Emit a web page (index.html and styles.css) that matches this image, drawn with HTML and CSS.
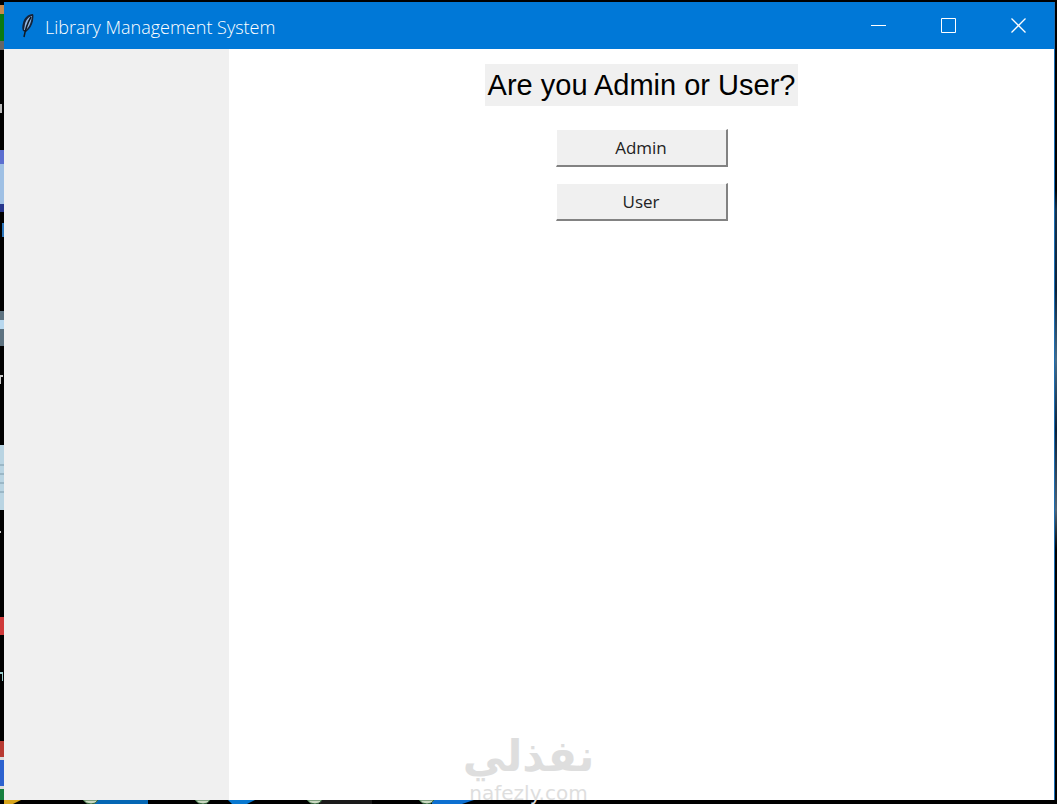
FILE: index.html
```html
<!DOCTYPE html>
<html lang="en">
<head>
    <meta charset="UTF-8">
    <meta name="viewport" content="width=device-width, initial-scale=1.0">
    <title>Library Management System</title>
    <link rel="stylesheet" href="styles.css">
</head>
<body>

    <!-- desktop behind the window -->
    <svg class="desktop-left" width="4" height="804" aria-hidden="true">
        <rect y="5" width="4" height="9" fill="#c98a4a"/>
        <rect y="14" width="4" height="27" fill="#0b7a12"/>
        <rect y="41" width="4" height="9" fill="#666"/>
        <path d="M0 104h2v9h-2z" fill="#bbb"/>
        <rect y="150" width="4" height="14" fill="#5c6fd0"/>
        <rect y="164" width="4" height="40" fill="#9fc0e4"/>
        <rect y="204" width="4" height="8" fill="#26368c"/>
        <rect x="2" y="223" width="2" height="14" fill="#2b76bd"/>
        <rect y="311" width="4" height="35" fill="#5d7280"/>
        <rect y="320" width="4" height="9" fill="#b8d8ef"/>
        <path d="M0 375h3v2h-2v7h-1z" fill="#ccc"/>
        <rect y="445" width="4" height="65" fill="#b9d4e2"/>
        <path d="M0 465h4M0 474h4M0 483h4M0 492h4" stroke="#7d9aaa"/>
        <rect y="531" width="1" height="2" fill="#ccc"/>
        <rect y="617" width="4" height="18" fill="#cf3a3a"/>
        <path d="M0 672h3v9h-1v-7h-2z" fill="#9cc"/>
        <rect y="741" width="4" height="16" fill="#b83a32"/>
        <rect y="757" width="4" height="3" fill="#ddd"/>
        <rect y="760" width="4" height="26" fill="#2d62cf"/>
        <rect y="786" width="4" height="3" fill="#ddd"/>
        <rect y="789" width="4" height="15" fill="#178040"/>
    </svg>
    <svg class="desktop-bottom" width="500" height="4" aria-hidden="true">
        <path d="M4 0h17l-8 4H4z" fill="#d8a51c"/>
        <path d="M96 0h52v4H92z" fill="#0567b4"/>
        <path d="M228 0h27l-8 4h-15z" fill="#0878d0"/>
        <path d="M320 0h52v4h-52z" fill="#1b1b1b"/>
        <path d="M432 0h42l-12 4h-30z" fill="#0d6fd0"/>
        <path d="M83 0h15q-2 4-7 4t-8-4zM195 0h15q-2 4-7 4t-8-4zM307 0h15q-2 4-7 4t-8-4zM419 0h15q-2 4-7 4t-8-4z" fill="#c9d8c0" stroke="#31643a"/>
    </svg>

    <div class="window">
        <header class="titlebar">
            <svg class="feather" width="18" height="26" viewBox="0 0 18 26" aria-hidden="true">
                <path d="M15 1C10 1 6 5 5 10c-1 3-1 6 0 8l3 1c4-3 6-7 7-11 0-3 1-5 0-7z" fill="#152338"/>
                <path d="M14 3C10 4 8 7 7 11l-1 6 2 0c4-4 5-8 6-14z" fill="#8fb4e0"/>
                <path d="M13 4C10 9 8 13 6 24" fill="none" stroke="#101820" stroke-width="1.5"/>
            </svg>
            <span class="title">Library Management System</span>
            <div class="controls">
                <button type="button" aria-label="Minimize">
                    <svg width="16" height="16"><path d="M0 7.500h15"/></svg>
                </button>
                <button type="button" aria-label="Maximize">
                    <svg width="16" height="16"><path d="M.5.5h14v14H.5z"/></svg>
                </button>
                <button type="button" aria-label="Close">
                    <svg width="16" height="16"><path d="M.5.5l14 14M14.500.5l-14 14" stroke-width="1.3"/></svg>
                </button>
            </div>
        </header>

        <div class="content">
            <aside class="sidebar"></aside>
            <main class="panel">
                <h1>Are you Admin or User?</h1>
                <button type="button" class="choice">Admin</button>
                <button type="button" class="choice">User</button>
            </main>
        </div>
    </div>

    <div class="watermark">
        <span class="watermark-ar" lang="ar" dir="rtl">نفذلي</span>
        <span class="watermark-en">nafezly.com</span>
    </div>

</body>
</html>
```

FILE: styles.css
```css
* {
    box-sizing: border-box;
}
body {
    position: relative;
    display: flex;
    min-height: 100vh;
    margin: 0;
    padding: 2px 2px 4px 4px;
    overflow: hidden;
    background: linear-gradient(#000 190px, #17334d 210px, #0b2138 290px, #486c88 360px, #0a2038 430px, #536575 510px, #000 550px);
    font-family: "Open Sans", sans-serif;
}
body::before,
body::after {
    content: "";
    position: absolute;
    left: 0;
    right: 0;
    height: 2px;
    background: #000;
}
body::before {
    top: 0;
}
body::after {
    bottom: 0;
    height: 4px;
}
.desktop-left {
    position: absolute;
    left: 0;
    top: 0;
    background: #000;
}
.desktop-bottom {
    position: absolute;
    left: 0;
    bottom: 0;
    z-index: 1;
}

/* window */
.window {
    position: relative;
    flex: 1;
    display: flex;
    flex-direction: column;
    border-right: 1px solid #1b6fb5;
    background: #fff;
}
.titlebar {
    display: flex;
    align-items: center;
    height: 47px;
    padding-left: 14px;
    background: #0078d7;
    color: #fff;
}
.title {
    flex: 1;
    margin-left: 9px;
    padding-top: 2px;
    font-size: 18px;
    font-weight: 300;
    line-height: 24px;
    white-space: nowrap;
}
.controls {
    display: flex;
    align-self: stretch;
}
.controls button {
    width: 70px;
    padding: 0;
    border: none;
    background: none;
}
.controls svg {
    display: block;
    margin: 0 auto;
    fill: none;
    stroke: #fff;
}
.content {
    flex: 1;
    display: flex;
}
.sidebar {
    width: 225px;
    background: #f0f0f0;
}
.panel {
    flex: 1;
    display: flex;
    flex-direction: column;
    align-items: center;
    padding-top: 15px;
}
h1 {
    margin: 0 0 23px;
    padding: 0 3px;
    background: #f0f0f0;
    color: #000;
    font-family: "Liberation Sans", Arial, sans-serif;
    font-size: 29px;
    font-weight: normal;
    line-height: 42px;
}
.choice {
    width: 172px;
    height: 38px;
    margin-bottom: 16px;
    padding: 0;
    border: solid;
    border-width: 1px 2px 2px 1px;
    border-color: #fff #828282 #828282 #fff;
    background: #f0f0f0;
    color: #222;
    font-family: "Open Sans", sans-serif;
    font-size: 17px;
}

/* watermark */
.watermark {
    position: absolute;
    left: 50%;
    bottom: 0;
    z-index: 2;
    display: flex;
    flex-direction: column;
    align-items: center;
    transform: translateX(-50%);
    color: #dedede;
    white-space: nowrap;
}
.watermark-ar {
    font-family: "DejaVu Sans", sans-serif;
    font-size: 43px;
    font-weight: bold;
    line-height: 52px;
}
.watermark-en {
    font-family: "DejaVu Sans", sans-serif;
    font-size: 20px;
    line-height: 22px;
}
```
